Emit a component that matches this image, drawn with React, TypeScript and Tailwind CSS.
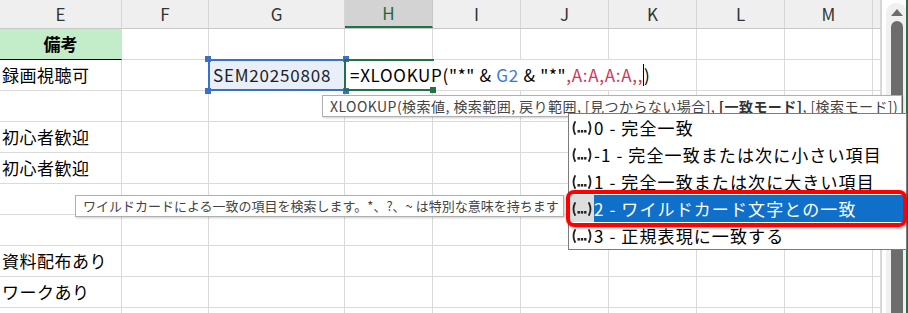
import type { ReactNode } from "react";

const FONT = "font-['Noto_Sans_CJK_JP','Noto_Sans',sans-serif]";

const columns = [
  { key: "E", w: "w-[122px]" },
  { key: "F", w: "w-[87px]" },
  { key: "G", w: "w-[136px]" },
  { key: "H", w: "w-[88px]" },
  { key: "I", w: "w-[88px]" },
  { key: "J", w: "w-[88px]" },
  { key: "K", w: "w-[88px]" },
  { key: "L", w: "w-[88px]" },
  { key: "M", w: "w-[88px]" },
  { key: "", w: "w-[8px]" },
];

// column E text, row by row (rows 1 and 2 are drawn separately)
const rowNotes = ["", "初心者歓迎", "初心者歓迎", "", "", "資料配布あり", "ワークあり", "", ""];

const matchModes = [
  "0 - 完全一致",
  "-1 - 完全一致または次に小さい項目",
  "1 - 完全一致または次に大きい項目",
  "2 - ワイルドカード文字との一致",
  "3 - 正規表現に一致する",
];

function Cell({ w, children, className = "" }: { w: string; children?: ReactNode; className?: string }) {
  return (
    <div
      className={`${w} h-[31px] shrink-0 border-r border-b border-[#dadada] flex items-center whitespace-nowrap ${className}`}
    >
      {children}
    </div>
  );
}

function HeaderRow() {
  return (
    <div className="flex h-[30px] border-b border-[#c8c8c8]">
      {columns.map((c) =>
        c.key === "H" ? (
          <div
            key={c.key}
            className={`${c.w} shrink-0 bg-[#d3d3d3] border-r border-[#c8c8c8] border-b-2 border-b-[#217346] flex items-center justify-center text-[17px] text-[#1d6b40]`}
          >
            {c.key}
          </div>
        ) : (
          <div
            key={c.key || "n"}
            className={`${c.w} shrink-0 bg-[#efefef] border-r border-[#d6d6d6] flex items-center justify-center text-[17px] text-[#333]`}
          >
            {c.key}
          </div>
        ),
      )}
    </div>
  );
}

function NoteRow({ note }: { note: string }) {
  return (
    <div className="flex">
      {columns.map((c, i) => (
        <Cell
          key={c.key || "n"}
          w={c.w}
          className={i === 0 ? "pl-[2px] text-[17px] tracking-[0.5px] text-black" : ""}
        >
          {i === 0 ? note : null}
        </Cell>
      ))}
    </div>
  );
}

function FormulaRow() {
  return (
    <div className="flex">
      <Cell w="w-[122px]" className="pl-[2px] text-[17px] tracking-[0.5px] text-black">
        録画視聴可
      </Cell>
      <Cell w="w-[87px]" />
      <div className="relative w-[136px] h-[31px] shrink-0 border-b border-[#dadada] bg-[#e9eff9] flex items-center pl-[4px] text-[17px] tracking-[0.8px] text-[#222]">
        SEM20250808
        <div className="absolute -left-px -top-px -right-px -bottom-px border-2 border-[#3b70c8]" />
        <div className="absolute -left-[4px] -top-[4px] w-[6px] h-[6px] bg-[#3b70c8]" />
        <div className="absolute -right-[4px] -top-[4px] w-[6px] h-[6px] bg-[#3b70c8]" />
        <div className="absolute -left-[4px] -bottom-[4px] w-[6px] h-[6px] bg-[#3b70c8]" />
        <div className="absolute -right-[4px] -bottom-[4px] w-[6px] h-[6px] bg-[#3b70c8]" />
      </div>
      <div className="relative w-[352px] h-[31px] shrink-0 border-r border-b border-[#dadada] flex items-center pl-[5px] whitespace-nowrap text-[17px] tracking-[0.7px] text-black">
        <span>=XLOOKUP("*" &amp;</span>
        <span className="text-[#3a7ad9]">&nbsp;G2</span>
        <span>&nbsp;&amp; "*"</span>
        <span className="text-[#d1365a]">,A:A,A:A,,</span>
        <span className="inline-block w-px h-[22px] bg-black" />
        <span>)</span>
        <div className="absolute -left-px -top-px w-[90px] h-[32px] border-l-2 border-t-2 border-b-2 border-[#217346]" />
        <div className="absolute left-[85px] top-[27px] w-[6px] h-[6px] bg-[#217346]" />
      </div>
      <Cell w="w-[88px]" />
      <Cell w="w-[88px]" />
      <Cell w="w-[8px]" />
    </div>
  );
}

function EllipsisIcon({ selected }: { selected?: boolean }) {
  return (
    <div className={`w-[25px] h-full flex items-center justify-center ${selected ? "bg-[#dedede]" : ""}`}>
      <svg width="22" height="16" viewBox="0 0 22 16" fill="none">
        <path d="M4 2 Q1 8 4 14" stroke="#222" strokeWidth="1.8" strokeLinecap="round" />
        <path d="M18 2 Q21 8 18 14" stroke="#222" strokeWidth="1.8" strokeLinecap="round" />
        <rect x="6.5" y="10" width="2.4" height="2.6" fill="#222" />
        <rect x="9.8" y="10" width="2.4" height="2.6" fill="#222" />
        <rect x="13.1" y="10" width="2.4" height="2.6" fill="#222" />
      </svg>
    </div>
  );
}

function Scrollbar() {
  return (
    <div className="w-[25px] h-full border-l border-[#d4d4d4] bg-white pl-[4px] pt-[3px]">
      <div className="w-[21px] h-full bg-[#f0f0f0] rounded-t-[10px] flex flex-col items-center pt-[6px]">
        <div className="w-0 h-0 border-l-[6px] border-r-[6px] border-b-[7px] border-l-transparent border-r-transparent border-b-[#6d6d6d]" />
        <div className="mt-[5px] w-[12px] flex-1 bg-[#6d6d6d] rounded-t-[6px]" />
      </div>
    </div>
  );
}

export default function App() {
  return (
    <div className={`relative w-[908px] h-[313px] overflow-hidden bg-white flex ${FONT}`}>
      <div className="w-[881px] shrink-0 flex flex-col">
        <HeaderRow />
        <div className="flex">
          <div className="w-[122px] h-[31px] shrink-0 bg-[#c3ecc9] border-r border-[#dadada] border-b border-b-black flex items-center justify-center text-[17px] font-bold text-black">
            備考
          </div>
          {columns.slice(1).map((c) => (
            <Cell key={c.key || "n"} w={c.w} />
          ))}
        </div>
        <FormulaRow />
        {rowNotes.map((note, i) => (
          <NoteRow key={i} note={note} />
        ))}
      </div>
      <Scrollbar />
      <div className="w-[2px] h-full bg-[#217346]" />

      {/* function argument tooltip */}
      <div className="absolute left-[322px] top-[95px] w-[580px] h-[22px] bg-white border border-[#b0b0b0] shadow-[1px_1px_2px_rgba(0,0,0,0.2)] pl-[7px] flex items-center whitespace-nowrap text-[14px] tracking-[0.45px] text-[#444]">
        XLOOKUP(検索値, 検索範囲, 戻り範囲, [見つからない場合],&nbsp;<b className="text-[#333]">[一致モード]</b>, [検索モード])
      </div>

      {/* description tooltip */}
      <div className="absolute left-[75px] top-[195px] w-[489px] h-[22px] bg-white border border-[#b0b0b0] shadow-[1px_1px_2px_rgba(0,0,0,0.2)] pl-[7px] flex items-center whitespace-nowrap text-[13px] text-[#444]">
        ワイルドカードによる一致の項目を検索します。*、?、~ は特別な意味を持ちます
      </div>

      {/* autocomplete list */}
      <div className="absolute left-[568px] top-[113px] w-[339px] bg-white border border-[#7c7c7c]">
        {matchModes.map((m, i) => (
          <div
            key={m}
            className={`h-[27px] flex items-center whitespace-nowrap text-[17px] tracking-[1.1px] ${i === 3 ? "text-white" : "text-black"}`}
          >
            <EllipsisIcon selected={i === 3} />
            <div className={`h-full flex-1 flex items-center ${i === 3 ? "bg-[#0f6fc9]" : ""}`}>{m}</div>
          </div>
        ))}
      </div>

      {/* annotation */}
      <div className="absolute left-[566px] top-[190px] w-[341px] h-[37px] border-4 border-[#ff0000] rounded-[8px] shadow-[1px_1px_3px_rgba(0,0,0,0.35)]" />
    </div>
  );
}
